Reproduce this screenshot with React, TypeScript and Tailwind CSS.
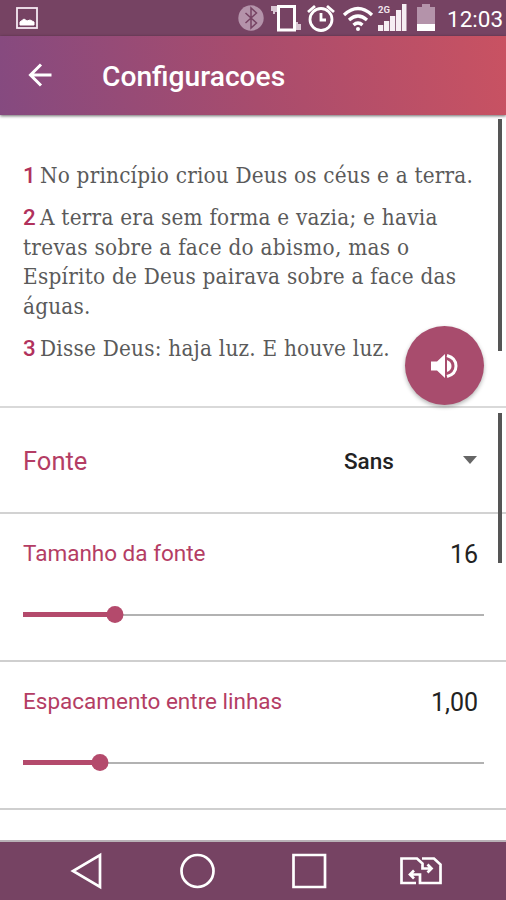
import type { ReactNode } from "react";

const verses = [
  {
    id: 1,
    lines: [{ text: "No princípio criou Deus os céus e a terra.", className: "tracking-[0.2px]" }],
  },
  {
    id: 2,
    lines: [
      { text: "A terra era sem forma e vazia; e havia", className: "tracking-[0.24px]" },
      { text: "trevas sobre a face do abismo, mas o", className: "tracking-[0.29px]" },
      { text: "Espírito de Deus pairava sobre a face das", className: "tracking-[0.25px]" },
      { text: "águas.", className: "tracking-[0.2px]" },
    ],
  },
  {
    id: 3,
    lines: [{ text: "Disse Deus: haja luz. E houve luz.", className: "tracking-[0.22px]" }],
  },
];

function StatusBar() {
  return (
    <header className="flex h-9 shrink-0 items-center justify-between bg-[#764363] pl-4 pr-[2px] text-white">
      <svg width="22" height="22" viewBox="0 0 22 22">
        <rect x="1" y="1" width="20" height="20" fill="none" stroke="#f6e9f2" strokeWidth="1.8" />
        <path d="M4 18v-3l4-3 3 2 3-1 4 2v3z" fill="white" stroke="white" strokeLinejoin="round" />
      </svg>
      <div className="flex items-center">
        <svg width="26" height="26" viewBox="0 0 26 26">
          <circle cx="13" cy="13" r="12.7" fill="#b493aa" />
          <path d="m7.5 8 11 10-5.5 5V3l5.5 5-11 10" fill="none" stroke="#764363" strokeWidth="1.5" />
        </svg>
        <svg width="30" height="28" viewBox="0 0 30 28" className="ml-[7px]">
          <path d="M0 2h7v6H4v2H2V7H0zM24 18h3v2h3v6h-6z" fill="#d9c6d3" />
          <rect x="7.5" y="2.5" width="16" height="23.500" fill="none" stroke="white" strokeWidth="3" />
        </svg>
        <svg width="30" height="28" viewBox="0 0 30 28" className="ml-[5px]" fill="none" stroke="white" strokeWidth="2.8">
          <circle cx="15" cy="15.5" r="11" />
          <path d="m2 8 7-6M28 8l-7-6M15 9v7h5" />
        </svg>
        <svg width="32" height="28" viewBox="0 0 32 28" className="ml-1.5" fill="none" stroke="white" strokeWidth="3.300">
          <path d="M2 11q14-13 28 0M7 16q9-8 18 0M11.500 21q4.500-4 9 0" />
          <circle cx="16" cy="25" r="2" fill="white" stroke="none" />
        </svg>
        <svg width="30" height="28" viewBox="0 0 30 28" className="ml-1">
          <text x="0" y="8.500" fontSize="9.500" fontWeight="700" fill="#f0e4ec" fontFamily="Roboto, sans-serif">2G</text>
          <path d="M0 21h5.200v6H0zM6 17h5.200v10H6zM12 12h5.200v15H12zM18 6h5.200v21H18zM24 0h4.500v27H24z" fill="#f6eef3" />
        </svg>
        <svg width="18" height="28" viewBox="0 0 18 28" className="ml-[9px]">
          <path d="M5 0h8v3h5v17H0V3h5z" fill="#b493aa" />
          <path d="M0 20h18v7H0z" fill="white" />
        </svg>
        <span className="ml-3 w-[57px] whitespace-nowrap pt-0.5 text-[22.5px] leading-none">12:03</span>
      </div>
    </header>
  );
}

function TitleBar() {
  return (
    <div className="relative z-10 flex h-[79px] shrink-0 items-center bg-linear-[80deg] from-[#854a80] via-[#a84c6d] to-[#c95262] pl-[28px] text-white shadow-[0_1px_3px_rgba(0,0,0,0.6)]">
      <svg width="24" height="24" viewBox="0 0 24 24" fill="none" stroke="white" strokeWidth="3" className="-mt-0.5">
        <path d="M23.500 12H3M13 1.500 2.500 12 13 22.500" />
      </svg>
      <h1 className="ml-[50px] pt-[3px] text-[28.2px] font-medium">Configuracoes</h1>
    </div>
  );
}

function Preview() {
  return (
    <section className="relative h-[293px] shrink-0 border-b-2 border-[#d9d9d9] pl-[23px] pt-[46px]">
      <div className="flex flex-col gap-3 font-['Roboto_Slab','DejaVu_Serif_Condensed','DejaVu_Serif',serif] text-[22.3px] leading-[29.8px] text-[#5a5a5a]">
        {verses.map((verse) => (
          <div key={verse.id}>
            {verse.lines.map((line, i) => (
              <p key={line.text} className="whitespace-nowrap">
                {i === 0 && (
                  <b className="inline-block w-[17px] font-[Roboto,sans-serif] font-medium text-[#b1315c]">{verse.id}</b>
                )}
                <span className={line.className}>{line.text}</span>
              </p>
            ))}
          </div>
        ))}
      </div>
      <button className="absolute bottom-px right-[22px] flex size-[79px] items-center justify-center rounded-full bg-[#a84c6d] shadow-[0_2px_4px_rgba(0,0,0,0.3)]">
        <svg width="28" height="26" viewBox="0 0 28 26">
          <path d="M0 8.500h6L14 1v24l-8-7.500H0z" fill="white" />
          <path d="M16 7q4.500 2 4.500 6T16 19z" fill="white" />
          <path d="M16 2.500q9 2.500 9 10.500t-9 10.500" fill="none" stroke="white" strokeWidth="3" />
        </svg>
      </button>
      <span className="absolute right-1 top-[4px] h-[232px] w-1 bg-[#555]" />
    </section>
  );
}

function SliderRow({ label, value, percent }: { label: string; value: ReactNode; percent: number }) {
  return (
    <section className="h-[148px] shrink-0 border-b-2 border-[#cfcfcf] px-[23px] pt-[26px]">
      <div className="flex h-[30px] items-center justify-between pr-[5px]">
        <span className="-mt-0.5 text-[22.5px] text-[#b43d64]">{label}</span>
        <span className="text-[25px] text-[#222]">{value}</span>
      </div>
      <div className="relative mt-[35px] flex h-[19px] w-[461px] items-center">
        <span className="h-[2px] w-full bg-[#b2b2b2]" />
        <span className="absolute left-0 h-[5px] bg-[#b44a6c]" style={{ width: `${percent}%` }} />
        <span
          className="absolute size-[17px] -translate-x-1/2 rounded-full bg-[#b44a6c]"
          style={{ left: `${percent}%` }}
        />
      </div>
    </section>
  );
}

function Settings() {
  return (
    <main className="relative flex h-[434px] shrink-0 flex-col overflow-hidden border-b-2 border-[#b9b1b7]">
      <section className="flex h-[106px] shrink-0 items-center border-b-2 border-[#d2d2d2] pl-[23px] pr-[29px]">
        <span className="w-[321px] pt-[3px] text-[25.5px] text-[#b43d64]">Fonte</span>
        <span className="pt-[3px] text-[22.5px] font-medium text-[#222]">Sans</span>
        <svg width="14" height="8" viewBox="0 0 14 8" className="ml-auto">
          <path d="M0 0h14L7 8z" fill="#666" />
        </svg>
      </section>
      <SliderRow label="Tamanho da fonte" value="16" percent={20} />
      <SliderRow label="Espacamento entre linhas" value="1,00" percent={16.7} />
      <span className="absolute right-1 top-[5px] h-[150px] w-1 bg-[#555]" />
    </main>
  );
}

function NavigationBar() {
  return (
    <nav className="flex flex-1 items-center bg-[#764363] pl-[70px]">
      <svg width="373" height="38" viewBox="0 0 373 38" fill="none" stroke="white" strokeWidth="2.700">
        <path d="M30 3v32L3 19z" />
        <circle cx="127.500" cy="19" r="16" />
        <path d="M223.500 3h31.500v32h-31.500z" />
        <path d="M346 31h-14.500V6.500H347l5.500 5V16.500h9m-4-4 4 4-4 4M352 6.500h12l6.500 6V31H350v-8.500h-10m4-4-4 4 4 4" />
      </svg>
    </nav>
  );
}

function App() {
  return (
    <div className="flex h-[900px] w-[506px] flex-col overflow-hidden bg-white font-[Roboto,sans-serif]">
      <StatusBar />
      <TitleBar />
      <Preview />
      <Settings />
      <NavigationBar />
    </div>
  );
}

export default App;
